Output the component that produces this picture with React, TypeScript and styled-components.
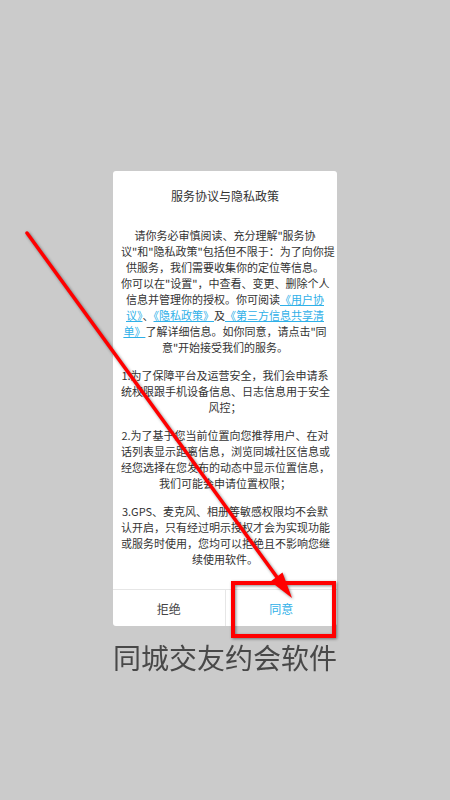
import React from "react";
import styled, { createGlobalStyle } from "styled-components";

const GlobalStyle = createGlobalStyle`
  html, body {
    margin: 0;
    padding: 0;
    background: #cbcbcb;
  }
  body {
    font-family: "Noto Sans CJK SC", "Noto Sans", sans-serif;
  }
`;

export default function App() {
  return (
    <Page>
      <GlobalStyle />

      <Dialog>
        <Title>服务协议与隐私政策</Title>

        <Body>
          <Paragraph>
            请你务必审慎阅读、充分理解"服务协
            <br />
            议"和"隐私政策"包括但不限于：为了向你提
            <br />
            供服务，我们需要收集你的定位等信息。
            <br />
            你可以在"设置"，中查看、变更、删除个人
            <br />
            信息并管理你的授权。你可阅读
            <Link>
              《用户协
              <br />
              议》
            </Link>
            、<Link>《隐私政策》</Link>及
            <Link>
              《第三方信息共享清
              <br />
              单》
            </Link>
            了解详细信息。如你同意，请点击"同
            <br />
            意"开始接受我们的服务。
          </Paragraph>

          <Paragraph>
            1.为了保障平台及运营安全，我们会申请系
            <br />
            统权限跟手机设备信息、日志信息用于安全
            <br />
            风控；
          </Paragraph>

          <Paragraph>
            2.为了基于您当前位置向您推荐用户、在对
            <br />
            话列表显示距离信息，浏览同城社区信息或
            <br />
            经您选择在您发布的动态中显示位置信息，
            <br />
            我们可能会申请位置权限；
          </Paragraph>

          <Paragraph>
            3.GPS、麦克风、相册等敏感权限均不会默
            <br />
            认开启，只有经过明示授权才会为实现功能
            <br />
            或服务时使用，您均可以拒绝且不影响您继
            <br />
            续使用软件。
          </Paragraph>
        </Body>

        <Actions>
          <ActionButton>拒绝</ActionButton>
          <ActionButton $primary>同意</ActionButton>
        </Actions>
      </Dialog>

      <Footer>同城交友约会软件</Footer>

      {/* 标注：红色箭头和方框 */}
      <Annotation viewBox="0 0 450 800">
        <line
          x1="27"
          y1="233"
          x2="279"
          y2="580"
          stroke="#ff0000"
          strokeWidth="3.5"
          strokeLinecap="round"
        />
        <polygon points="292,598 270.5,581.5 282.5,572.5" fill="#ff0000" />
        <rect
          x="233"
          y="583"
          width="101"
          height="53"
          fill="none"
          stroke="#ff0000"
          strokeWidth="4"
        />
      </Annotation>
    </Page>
  );
}

const Page = styled.div`
  position: relative;
  min-height: 800px;
  display: flex;
  flex-direction: column;
  align-items: center;
  padding-top: 171px;
  box-sizing: border-box;
  background: #cbcbcb;
  overflow: hidden;
`;

const Dialog = styled.div`
  width: 224px;
  display: flex;
  flex-direction: column;
  background: #fff;
  border-radius: 3px;
  overflow: hidden;
`;

const Title = styled.div`
  padding-top: 17px;
  font-size: 12px;
  line-height: 16px;
  color: #333;
  text-align: center;
`;

const Body = styled.div`
  display: flex;
  flex-direction: column;
  gap: 12px;
  padding: 23px 8px 22px;
`;

const Paragraph = styled.p`
  margin: 0;
  font-size: 11px;
  line-height: 16px;
  color: #333;
  text-align: center;
  white-space: nowrap;
`;

const Link = styled.span`
  color: #2fb0e8;
  text-decoration: underline;
`;

const Actions = styled.div`
  display: flex;
  border-top: 1px solid #e6e6e6;
`;

const ActionButton = styled.div<{ $primary?: boolean }>`
  flex: 1;
  height: 36px;
  display: flex;
  align-items: center;
  justify-content: center;
  font-size: 12px;
  color: ${(p) => (p.$primary ? "#2fb0e8" : "#444")};

  & + & {
    border-left: 1px solid #e6e6e6;
  }
`;

const Footer = styled.div`
  margin-top: 14px;
  font-size: 28px;
  line-height: 34px;
  color: #484848;
  filter: blur(0.6px);
`;

const Annotation = styled.svg`
  position: absolute;
  top: 0;
  left: 0;
  width: 450px;
  height: 800px;
  pointer-events: none;
  filter: drop-shadow(1.5px 1.5px 1.5px rgba(0, 0, 0, 0.45));
`;
